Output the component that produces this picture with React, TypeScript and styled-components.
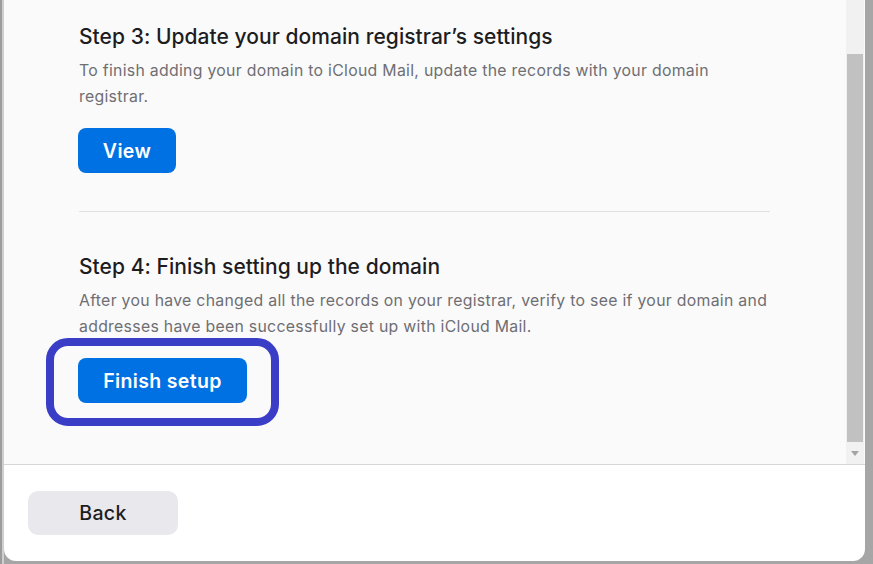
import React from "react";
import styled, { createGlobalStyle } from "styled-components";

const Global = createGlobalStyle`
  html, body { margin: 0; padding: 0; }
  body {
    width: 873px;
    height: 564px;
    overflow: hidden;
    background: #a3a3a3;
    font-family: Inter, "Open Sans", "Liberation Sans", sans-serif;
  }
`;

const Stage = styled.div`
  width: 873px;
  height: 564px;
  display: flex;
  align-items: flex-start;
  background: linear-gradient(90deg, #9c9c9c 0 2px, #cfcfcf 2px 4px, #a6a6a6 4px);
`;

const Dialog = styled.div`
  margin-left: 4px;
  width: 861px;
  height: 561px;
  background: #ffffff;
  border-radius: 0 0 12px 12px;
  display: flex;
  flex-direction: column;
  overflow: hidden;
`;

const ScrollArea = styled.div`
  height: 465px;
  display: flex;
  background: #fafafa;
  border-bottom: 1px solid #d6d6d6;
  box-sizing: border-box;
`;

const Content = styled.div`
  flex: 1;
  padding: 24px 60px 0 75px;
`;

const Section = styled.section`
  display: flex;
  flex-direction: column;
  align-items: flex-start;
`;

const Heading = styled.h2`
  margin: 0;
  font-size: 21px;
  font-weight: 500;
  letter-spacing: 0.05px;
  color: #1d1d1f;
  line-height: 25px;
`;

const Body = styled.p`
  margin: 9px 0 0;
  font-size: 15.8px;
  line-height: 26px;
  letter-spacing: 0.3px;
  color: #6e6e73;
  max-width: 700px;
`;

const Action = styled.div`
  margin-top: 18px;
  display: flex;
`;

const PrimaryButton = styled.button<{ $w: number }>`
  display: block;
  margin-left: -1px;
  width: ${(p) => p.$w}px;
  height: 45px;
  border: none;
  border-radius: 8px;
  background: #0071e3;
  color: #ffffff;
  font-family: inherit;
  font-size: 19.5px;
  font-weight: 600;
  letter-spacing: 0.35px;
  cursor: pointer;
`;

const Highlight = styled(Action)`
  position: relative;
  &::after {
    content: "";
    position: absolute;
    left: -33px;
    right: -32px;
    top: -20px;
    bottom: -23px;
    border: 8px solid #3a3ec6;
    border-radius: 22px;
    pointer-events: none;
  }
`;

const Divider = styled.hr`
  margin: 38px 0 0 0;
  width: 691px;
  border: none;
  border-top: 1px solid #e0e0e0;
`;

const Spaced = styled.div`
  margin-top: 42px;
`;

const Scrollbar = styled.div`
  width: 18px;
  display: flex;
  flex-direction: column;
  background: #f1f1f1;
  margin-right: 1px;
`;

const TrackGap = styled.div<{ $h: number }>`
  height: ${(p) => p.$h}px;
`;

const Thumb = styled.div`
  flex: 1;
  margin: 0 1px;
  background: #c1c1c1;
`;

const Arrow = styled.div`
  height: 22px;
  display: flex;
  align-items: center;
  justify-content: center;
`;

const Footer = styled.div`
  flex: 1;
  padding: 26px 0 0 24px;
`;

const SecondaryButton = styled.button`
  width: 150px;
  height: 44px;
  border: none;
  border-radius: 10px;
  background: #e8e8ed;
  color: #1d1d1f;
  font-family: inherit;
  font-size: 19.5px;
  font-weight: 500;
  letter-spacing: 0.35px;
  cursor: pointer;
`;

export default function App() {
  return (
    <>
      <Global />
      <Stage>
        <Dialog>
          <ScrollArea>
            <Content>
              <Section>
                <Heading>Step 3: Update your domain registrar’s settings</Heading>
                <Body>
                  To finish adding your domain to iCloud Mail, update the records with your domain
                  registrar.
                </Body>
                <Action>
                  <PrimaryButton $w={98}>View</PrimaryButton>
                </Action>
              </Section>
              <Divider />
              <Spaced>
                <Section>
                  <Heading>Step 4: Finish setting up the domain</Heading>
                  <Body>
                    After you have changed all the records on your registrar, verify to see if your
                    domain and addresses have been successfully set up with iCloud Mail.
                  </Body>
                  <Highlight>
                    <PrimaryButton $w={169}>Finish setup</PrimaryButton>
                  </Highlight>
                </Section>
              </Spaced>
            </Content>
            <Scrollbar>
              <TrackGap $h={54} />
              <Thumb />
              <Arrow>
                <svg width="8" height="5" viewBox="0 0 8 5">
                  <path d="M0 0h8L4 5z" fill="#a3a3a3" />
                </svg>
              </Arrow>
            </Scrollbar>
          </ScrollArea>
          <Footer>
            <SecondaryButton>Back</SecondaryButton>
          </Footer>
        </Dialog>
      </Stage>
    </>
  );
}
